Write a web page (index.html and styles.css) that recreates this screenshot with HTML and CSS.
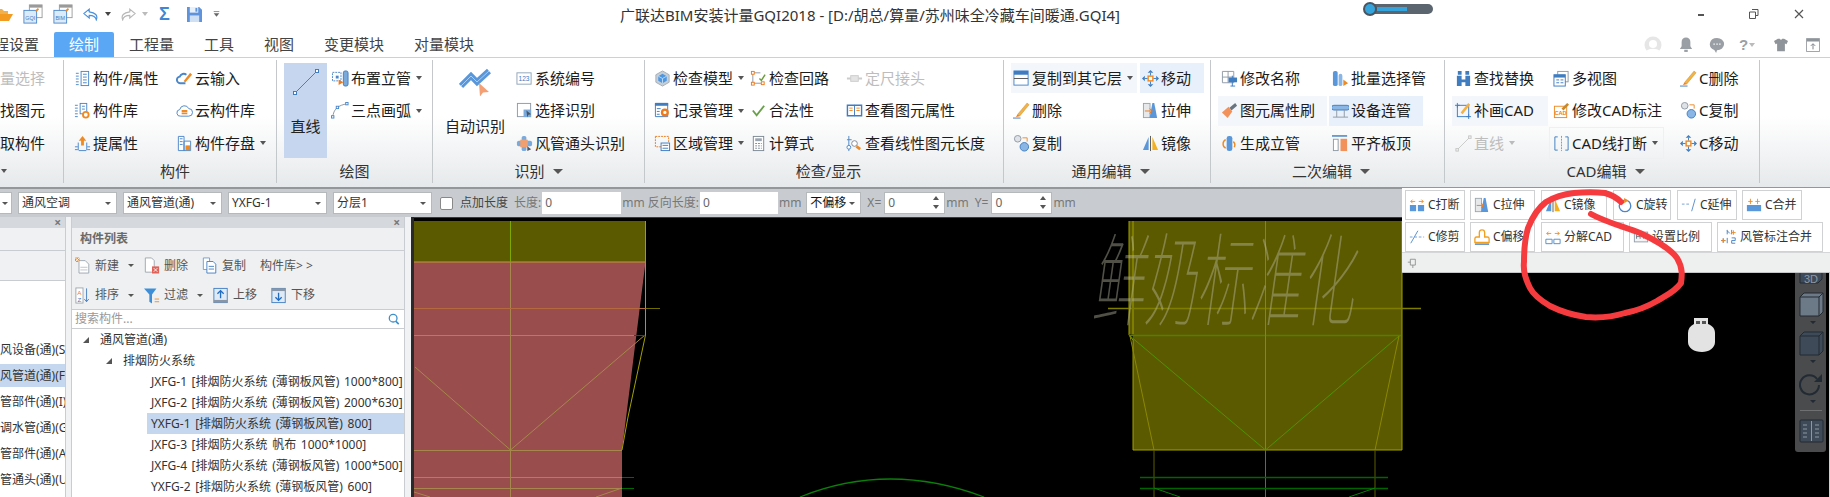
FILE: index.html
```html
<!DOCTYPE html>
<html lang="zh-CN">
<head>
<meta charset="utf-8">
<title>广联达BIM安装计量GQI2018</title>
<link rel="stylesheet" href="styles.css">
</head>
<body>
<svg class="sprite" xmlns="http://www.w3.org/2000/svg">
<symbol id="list" viewBox="0 0 18 18"><g fill="none" stroke="#4a86c8"><rect x="7.5" y="1.5" width="8" height="15"/><path d="M9.5 4.500h4M9.500 7.500h4M9.500 10.500h4M9.500 13.500h4M2 3.500h3M2 6.500h3M2 9.500h3M2 12.500h3M2 15.500h3"/></g></symbol>
<symbol id="liblist" viewBox="0 0 18 18"><g fill="none" stroke="#4a86c8"><rect x="6.500" y="1.500" width="7" height="11"/><path d="M8.500 4.500h3M8.500 7.500h3M1 3.500h3M1 6.500h3M1 9.500h3M1 12.500h3M1 15.500h3"/></g><circle cx="12.500" cy="13.500" r="3" fill="#fff" stroke="#ee8a24" stroke-width="2"/></symbol>
<symbol id="upattr" viewBox="0 0 18 18"><path d="M9 1l4 5h-2.500v5h-3V6H5z" fill="#ee8a24"/><path d="M1 12.500h3M1 15.500h3M14 12.500h3M14 15.500h3M5 16.500h8M4.500 8v8M13.500 8v8" fill="none" stroke="#4a86c8"/></symbol>
<symbol id="cloudpen" viewBox="0 0 18 18"><path d="M10 14H5a3.500 3.500 0 0 1-1-7 4.500 4.500 0 0 1 7-2" fill="none" stroke="#4a86c8" stroke-width="2"/><path d="M8 12l7-9 2 2-7 8z" fill="#ee8a24"/></symbol>
<symbol id="cloudlib" viewBox="0 0 18 18"><path d="M5 15a3.500 3.500 0 0 1-1-7 5 5 0 0 1 9.500-1 4 4 0 0 1 0 8z" fill="#fff" stroke="#4a86c8"/><path d="M6 9.500h6M6 12h6" stroke="#ee8a24" stroke-width="2"/></symbol>
<symbol id="disk" viewBox="0 0 18 18"><path d="M2.500 1.500h6v15h-6zM8.500 6.500h7v10h-7z" fill="#fff" stroke="#4a86c8"/><path d="M4 4h3M4 7h3M4 10h3" stroke="#4a86c8"/><rect x="10" y="11" width="5" height="5" fill="#ee8a24"/></symbol>
<symbol id="riser" viewBox="0 0 20 18"><rect x="1.500" y="2.500" width="9" height="9" fill="none" stroke="#4a86c8" stroke-dasharray="2 1"/><rect x="5" y="6" width="3" height="3" fill="#4a86c8"/><rect x="13" y="1" width="5" height="16" rx="2" fill="#7aa9dc" stroke="#3f7cc0"/><path d="M8 10l5 3-5 3z" fill="#ee7a1c"/></symbol>
<symbol id="arc" viewBox="0 0 20 18"><path d="M2 16C2 8 8 3 17 2" fill="none" stroke="#8a96a4"/><g fill="#fff" stroke="#4a86c8"><rect x="0.500" y="14.500" width="2.500" height="2.500"/><rect x="15.500" y="0.500" width="2.500" height="2.500"/><rect x="5.500" y="4.500" width="2.500" height="2.500"/></g></symbol>
<symbol id="num" viewBox="0 0 18 18"><rect x="1" y="3" width="15" height="12" fill="#fff" stroke="#8fa3b8"/><text x="8.500" y="12" font-size="7" text-anchor="middle" fill="#3f7cc0" font-family="Liberation Sans">123</text></symbol>
<symbol id="sel" viewBox="0 0 18 18"><rect x="1.500" y="1.500" width="14" height="14" fill="#fff" stroke="#8f9aa6"/><rect x="8" y="8" width="8" height="8" fill="#7aa9dc"/><path d="M11 9l5 4-3 .5-1 3z" fill="#4a5560"/></symbol>
<symbol id="joint" viewBox="0 0 18 18"><rect x="6" y="1" width="5" height="16" rx="2" fill="#7aa9dc"/><rect x="1" y="6" width="16" height="6" rx="2" fill="#7aa9dc"/><rect x="4.500" y="5" width="8" height="8" fill="#f0a070"/><path d="M12 12l4 3-4 2z" fill="#4a5560"/></symbol>
<symbol id="cube" viewBox="0 0 18 18"><path d="M9 1l7 4v8l-7 4-7-4V5z" fill="#c7ced6" stroke="#a4adb6"/><path d="M9 4l4.500 2.500v5L9 14l-4.500-2.500v-5z" fill="#4f97e0"/><path d="M4.500 6.500L9 9l4.500-2.500M9 9v5" fill="none" stroke="#bcdcf8"/></symbol>
<symbol id="loop" viewBox="0 0 18 18"><path d="M3 2v12h9M3 3h8" fill="none" stroke="#8a96a4"/><path d="M10 9l2 2 4-6" fill="none" stroke="#6a9d3a" stroke-width="1.500"/><g fill="#fff" stroke="#ee7a1c"><rect x="1.500" y="1.500" width="3" height="3"/><rect x="1.500" y="13" width="3" height="3"/><rect x="12" y="12.500" width="3" height="3"/></g></symbol>
<symbol id="ruler" viewBox="0 0 18 18"><path d="M1 9h4M13 9h4" stroke="#ccc" stroke-width="2"/><rect x="5" y="6" width="8" height="6" fill="#e4e4e4" stroke="#ccc"/></symbol>
<symbol id="recgear" viewBox="0 0 18 18"><path d="M1.500 1.500h13v14h-13z" fill="#fff" stroke="#3f7cc0"/><path d="M1 1h14v3H1z" fill="#3f7cc0"/><path d="M3 7h4M3 10h3M3 13h3" stroke="#3f7cc0"/><circle cx="11.500" cy="11" r="3" fill="#fff" stroke="#ee7a1c" stroke-width="2.500"/></symbol>
<symbol id="check" viewBox="0 0 18 18"><path d="M3 9l4 5 8-10" fill="none" stroke="#6aa04a" stroke-width="2"/></symbol>
<symbol id="calc" viewBox="0 0 18 18"><rect x="3.500" y="1.500" width="11" height="15" fill="#fff" stroke="#7d8895"/><rect x="5.500" y="3.500" width="7" height="3" fill="#9aa4ae"/><path d="M5.500 9h7M5.500 11.500h7M5.500 14h7" stroke="#7d8895" stroke-dasharray="2 1"/></symbol>
<symbol id="area" viewBox="0 0 18 18"><rect x="1.500" y="1.500" width="14" height="11" fill="none" stroke="#ee7a1c" stroke-dasharray="2 1"/><rect x="7.500" y="8.500" width="9" height="8" fill="#fff" stroke="#3f7cc0"/><path d="M9 11h6M9 14h6" stroke="#3f7cc0"/></symbol>
<symbol id="book" viewBox="0 0 18 18"><path d="M1.500 3.500h15v11h-15z" fill="#fff" stroke="#3f7cc0" stroke-width="1.500"/><path d="M9 3v12" stroke="#3f7cc0"/><path d="M3.500 6.500h3.500M3.500 9h3.500M11 6.500h3.500M11 9h3.500" stroke="#ee8a24"/></symbol>
<symbol id="measure" viewBox="0 0 18 18"><path d="M3 1v16M1 5h5" stroke="#4a86c8" fill="none"/><circle cx="3" cy="13" r="2" fill="#fff" stroke="#4a86c8"/><circle cx="9" cy="9" r="3" fill="#fff" stroke="#7d8895"/><path d="M11 12l4 3" stroke="#ee8a24" stroke-width="3"/></symbol>
<symbol id="window" viewBox="0 0 18 18"><rect x="1" y="1" width="15" height="15" fill="#fff" stroke="#4a86c8"/><rect x="1" y="1" width="15" height="4" fill="#3f7cc0"/><path d="M1 9h15" stroke="#555"/></symbol>
<symbol id="move" viewBox="0 0 18 18"><path d="M9 0l3 3H6zM9 18l-3-3h6zM0 9l3-3v6zM18 9l-3 3V6z" fill="#3f7cc0"/><path d="M9 3v3M9 12v3M3 9h3M12 9h3" stroke="#3f7cc0"/><rect x="6.500" y="6.500" width="5" height="5" fill="#fff" stroke="#ee8a24" stroke-width="1.500"/></symbol>
<symbol id="pencil" viewBox="0 0 18 18"><path d="M5 13L15 1l2 2L7 15z" fill="#f2b344" stroke="#c88a2a" stroke-width=".5"/><path d="M3 16l2-3 2 2z" fill="#ee7a1c"/><path d="M0 17h8" stroke="#3f7cc0"/></symbol>
<symbol id="stretch" viewBox="0 0 18 18"><rect x="1.500" y="1.500" width="7" height="15" fill="#e6e8ea" stroke="#9aa4ae"/><path d="M11 1h2l3 16H8z" fill="#5a97da"/><path d="M3 9.500h7M8 7l3 2.500L8 12" fill="none" stroke="#ee7a1c"/></symbol>
<symbol id="copy" viewBox="0 0 18 18"><circle cx="5" cy="4" r="3.500" fill="#dfe3e7" stroke="#8f9aa6"/><circle cx="12" cy="12.500" r="4.500" fill="#8ab6e6" stroke="#3f7cc0"/><path d="M10 3h5v4" fill="none" stroke="#ee8a24"/></symbol>
<symbol id="mirror" viewBox="0 0 18 18"><path d="M1 16L7 2v14z" fill="#5a97da"/><path d="M11 2l6 14h-6z" fill="#f2b020"/><path d="M9 1v16" stroke="#555"/></symbol>
<symbol id="rename" viewBox="0 0 18 18"><path d="M1.500 1.500h12v12h-12zM1.500 7.500h12M7.500 1.500v12" fill="#fff" stroke="#8f9aa6"/><path d="M8 8h9v5H8z" fill="#3f7cc0"/><path d="M12 6v11M10 17h5" stroke="#3f7cc0"/></symbol>
<symbol id="batch" viewBox="0 0 18 18"><rect x="1" y="1" width="5" height="16" rx="2" fill="#5a97da"/><rect x="7" y="4" width="4" height="13" rx="2" fill="#8ab6e6"/><path d="M12 10l5 4-5 3z" fill="#ee8a24"/></symbol>
<symbol id="brush" viewBox="0 0 18 18"><path d="M9 6l6-5 2 3-6 5z" fill="#6a7480"/><path d="M1 11l7-6 4 5-5 7z" fill="#f2925a"/></symbol>
<symbol id="fit" viewBox="0 0 18 18"><path d="M2 3.500h14a1 1 0 0 1 0 5H2a1 1 0 0 1 0-5z" fill="#8ab6e6" stroke="#3f7cc0"/><path d="M5 8v8M13 8v8M1 16h16" stroke="#8f9aa6" fill="none"/></symbol>
<symbol id="gen" viewBox="0 0 18 18"><rect x="6" y="1" width="6" height="16" rx="2.500" fill="#5a97da"/><path d="M5 5a5 5 0 0 0 0 9M13 7a5 5 0 0 1 1 6" fill="none" stroke="#ee8a24" stroke-width="1.500"/></symbol>
<symbol id="align" viewBox="0 0 18 18"><path d="M0 1h16" stroke="#3f7cc0" stroke-width="1.500"/><rect x="1.500" y="4.500" width="5" height="12" fill="#fff" stroke="#8f9aa6"/><rect x="9" y="4" width="7" height="13" fill="#f2925a"/></symbol>
<symbol id="find" viewBox="0 0 18 18"><path d="M2 6h5v4h4V6h5v11h-5v-4H7v4H2zM3 1h4v4H3zM11 1h4v4h-4z" fill="#3f7cc0"/></symbol>
<symbol id="multi" viewBox="0 0 18 18"><rect x="5" y="1.500" width="11" height="11" fill="#fff" stroke="#8f9aa6"/><rect x="1" y="5" width="12" height="12" fill="#fff" stroke="#3f7cc0"/><path d="M1 5h12v3H1z" fill="#3f7cc0"/><path d="M3.500 10.500h3M8 10.500h3M3.500 13.500h3M8 13.500h3" stroke="#3f7cc0"/></symbol>
<symbol id="patch" viewBox="0 0 18 18"><rect x="2.500" y="3.500" width="12" height="12" fill="none" stroke="#3f7cc0"/><path d="M0 3.500h5M2.500 1v5M12 15.500h5M14.500 13v5" stroke="#3f7cc0"/><path d="M6 11l8-10 2 2-8 10z" fill="#f2b344"/></symbol>
<symbol id="modcad" viewBox="0 0 18 18"><rect x="1.500" y="4.500" width="13" height="12" fill="#fff" stroke="#ee8a24"/><text x="8" y="14" font-size="6" text-anchor="middle" fill="#ee7a1c" font-weight="700" font-family="Liberation Sans">CAD</text><path d="M9 7l6-6 2 2-6 6z" fill="#c88a2a"/></symbol>
<symbol id="gline" viewBox="0 0 18 18"><path d="M2 16L16 2" stroke="#c9c9c9"/><rect x="1" y="14.500" width="2.500" height="2.500" fill="#fff" stroke="#c0c0c0"/><rect x="14.500" y="1" width="2.500" height="2.500" fill="#fff" stroke="#c0c0c0"/></symbol>
<symbol id="cadcut" viewBox="0 0 18 18"><path d="M5 2H2v14h3M13 2h3v14h-3" fill="none" stroke="#3f7cc0"/><path d="M9 1v16" stroke="#ee7a1c" stroke-dasharray="2 1"/></symbol>
<symbol id="bars" viewBox="0 0 18 18"><rect x="1" y="9" width="7" height="7" fill="#5a97da"/><rect x="10" y="9" width="7" height="7" fill="#5a97da"/><path d="M2 5h5M4 3L2 5l2 2M16 5h-5M14 3l2 2-2 2" fill="none" stroke="#ee8a24"/></symbol>
<symbol id="merge" viewBox="0 0 18 18"><rect x="1" y="9" width="16" height="7" fill="#5a97da"/><path d="M5 2v6M2.500 5h5M13 2v6M10.500 5h5" fill="none" stroke="#ee8a24"/></symbol>
<symbol id="rotate" viewBox="0 0 18 18"><circle cx="9" cy="10" r="6.500" fill="none" stroke="#4a86c8" stroke-width="1.500"/><path d="M8 1l5 3-5 3z" fill="#ee8a24"/></symbol>
<symbol id="extend" viewBox="0 0 18 18"><path d="M1 8h10" stroke="#6a9ad0" stroke-dasharray="3 2"/><path d="M12 16l4-14" stroke="#4a86c8"/></symbol>
<symbol id="trim" viewBox="0 0 18 18"><path d="M2 16L10 2" stroke="#4a86c8"/><path d="M1 9h16" stroke="#6a9ad0" stroke-dasharray="3 2"/></symbol>
<symbol id="offset" viewBox="0 0 18 18"><path d="M1 15v-4c0-1 1-2 2-2h3V4c0-2 1-3 3-3s3 1 3 3v5h3c1 0 2 1 2 2v4z" fill="#fff" stroke="#f2a020" stroke-width="1.500"/><path d="M1 17h16" stroke="#3f7cc0" stroke-width="1.500"/></symbol>
<symbol id="explode" viewBox="0 0 18 18"><path d="M1 11.500h7v5H1zM10 11.500h7v5h-7z" fill="#fff" stroke="#4a86c8"/><path d="M2 5h5M4 3L2 5l2 2M16 5h-5M14 3l2 2-2 2" fill="none" stroke="#ee8a24"/></symbol>
<symbol id="scale" viewBox="0 0 18 18"><rect x="1.500" y="3.500" width="15" height="11" fill="#f2f4f6" stroke="#8f9aa6"/><path d="M4 6v5M4 8.500h4M8 6v5M12 6v5" stroke="#6a7480"/></symbol>
<symbol id="hmerge" viewBox="0 0 18 18"><path d="M7 1v5M12 1v5M7 2l3 3M0 13h5M2.500 10.500v5" stroke="#3f7cc0" fill="none"/><path d="M14 1.500v5M11.500 4h5M2.500 10.500v5M0 13h5" stroke="#ee8a24" fill="none"/><path d="M7 10v6M12 16h4M12 10h4v3h-4v3" stroke="#3f7cc0" fill="none"/></symbol>
<symbol id="new" viewBox="0 0 18 18"><path d="M4.500 3.500h7l4 4v10h-11z" fill="#fff" stroke="#9aa4ae"/><path d="M6 11h8M6 14h8" stroke="#b8c0c8"/><path d="M0 0h5v5H0z" fill="#ee8a24"/><path d="M0 0l5 5M5 0L0 5" stroke="#fff"/></symbol>
<symbol id="del" viewBox="0 0 18 18"><path d="M1.500.5h7l3 3v13h-10z" fill="#fff" stroke="#9aa4ae"/><rect x="9" y="10" width="8" height="8" fill="#e0635a"/><path d="M11 12l4 4M15 12l-4 4" stroke="#fff"/></symbol>
<symbol id="dup" viewBox="0 0 18 18"><path d="M1.500.5h7v13h-7z" fill="#fff" stroke="#6a9ad0"/><path d="M5.500 4.500h7l3 3v10h-10z" fill="#fff" stroke="#3f7cc0"/><path d="M7.500 10h6M7.500 13h6" stroke="#3f7cc0"/></symbol>
<symbol id="sort" viewBox="0 0 18 18"><rect x="1" y="0.500" width="8" height="17" fill="#fff" stroke="#9aa4ae"/><text x="5" y="8" font-size="7" text-anchor="middle" fill="#ee7a1c" font-family="Liberation Sans">A</text><text x="5" y="16" font-size="7" text-anchor="middle" fill="#3f7cc0" font-family="Liberation Sans">Z</text><path d="M13 1v15M10.500 13l2.500 3 2.500-3" fill="none" stroke="#3f7cc0"/></symbol>
<symbol id="funnel" viewBox="0 0 18 18"><path d="M0 1h14L9 8v10L6 16V8z" fill="#3f8fd8"/><path d="M12 13h5M12 16h5" stroke="#ee8a24"/></symbol>
<symbol id="moveup" viewBox="0 0 18 18"><rect x="1" y="1" width="15" height="16" fill="#dfeaf6" stroke="#3f7cc0"/><rect x="1" y="14" width="15" height="3" fill="#8a96a4"/><path d="M8.500 12V4M5 7l3.500-3.500L12 7" fill="none" stroke="#1f6cc0" stroke-width="1.500"/></symbol>
<symbol id="movedn" viewBox="0 0 18 18"><rect x="1" y="1" width="15" height="16" fill="#dfeaf6" stroke="#3f7cc0"/><rect x="1" y="1" width="15" height="3" fill="#8a96a4"/><path d="M8.500 6v8M5 11l3.500 3.500L12 11" fill="none" stroke="#1f6cc0" stroke-width="1.500"/></symbol>
</svg>

<header class="titlebar">
  <div class="qat">
    <svg class="qi folder" viewBox="0 0 18 16"><path d="M0 3h6l2 2h4v3H4L0 15z" fill="#f0b050"/><path d="M3 8h14l-4 7H0z" fill="#f29a22"/></svg>
    <svg class="qi prj" viewBox="0 0 22 22"><rect x="7" y="1" width="14" height="14" fill="#fff" stroke="#9a9a9a"/><rect x="7" y="1" width="14" height="3" fill="#9a9a9a"/><rect x="1" y="7" width="14" height="14" fill="#dcebf9" stroke="#4a86c8"/><text x="8" y="18" font-size="6" text-anchor="middle" fill="#3f7cc0" font-family="Liberation Sans">GQI</text><path d="M14 8l3-3" stroke="#ee8a24" stroke-width="2"/></svg>
    <svg class="qi prj" viewBox="0 0 22 22"><rect x="7" y="1" width="14" height="14" fill="#fff" stroke="#9a9a9a"/><rect x="7" y="1" width="14" height="3" fill="#9a9a9a"/><rect x="1" y="7" width="14" height="14" fill="#dcebf9" stroke="#4a86c8"/><text x="8" y="18" font-size="6" text-anchor="middle" fill="#3f7cc0" font-family="Liberation Sans">BIM</text><path d="M14 8l3-3" stroke="#ee8a24" stroke-width="2"/></svg>
    <svg class="qi undo" viewBox="0 0 18 14"><path d="M7 1L1 6l6 5V8c4 0 7 .5 8 5 2-5-1-8-8-9z" fill="#fff" stroke="#4a90dd" stroke-width="1.300"/></svg>
    <i class="caret dark"></i>
    <svg class="qi redo" viewBox="0 0 18 14"><path d="M11 1l6 5-6 5V8c-4 0-7 .5-8 5-2-5 1-8 8-9z" fill="#fff" stroke="#b8b8b8" stroke-width="1.300"/></svg>
    <i class="caret light"></i>
    <span class="sigma">Σ</span>
    <svg class="qi save" viewBox="0 0 16 16"><path d="M0 0h13l3 3v13H0z" fill="#5f94dc"/><rect x="3" y="0" width="9" height="6" fill="#e8f0fa"/><rect x="9" y="1" width="2" height="4" fill="#5f94dc"/><rect x="3" y="9" width="10" height="7" fill="#cfe0f5"/></svg>
    <svg class="qi more" viewBox="0 0 10 10"><path d="M1 1.500h8" stroke="#666"/><path d="M1 4h8L5 9z" fill="#666"/></svg>
  </div>
  <h1 class="title">广联达BIM安装计量GQI2018 - [D:/胡总/算量/苏州味全冷藏车间暖通.GQI4]</h1>
  <div class="slider"><span class="knob"></span><span class="fill"></span></div>
  <div class="winctl">
    <svg class="wmin" viewBox="0 0 8 4"><rect width="6" height="2" fill="#555"/></svg>
    <svg class="wmax" viewBox="0 0 10 10"><path d="M3 .5h6v6H7M.5 3h6v6.500h-6z" fill="#fff" stroke="#555"/></svg>
    <svg class="wclose" viewBox="0 0 10 10"><path d="M1 1l8 8M9 1L1 9" stroke="#555" stroke-width="1.200"/></svg>
  </div>
</header>

<nav class="tabs">
  <span class="tab first">程设置</span>
  <span class="tab on">绘制</span>
  <span class="tab">工程量</span>
  <span class="tab">工具</span>
  <span class="tab">视图</span>
  <span class="tab">变更模块</span>
  <span class="tab">对量模块</span>
  <div class="tabtools">
    <svg class="tt avatar" viewBox="0 0 18 18"><circle cx="9" cy="9" r="8.500" fill="#e6e6e6"/><circle cx="9" cy="8" r="4" fill="#fff"/><path d="M2.500 15c2-3 11-3 13 0a8.500 8.500 0 0 1-13 0z" fill="#fff"/></svg>
    <svg class="tt bell" viewBox="0 0 16 18"><path d="M8 1c3 0 5 2 5 5v5l2 3H1l2-3V6c0-3 2-5 5-5z" fill="#9a9fa5"/><rect x="6" y="15" width="4" height="2.500" fill="#9a9fa5"/></svg>
    <svg class="tt chat" viewBox="0 0 18 18"><path d="M9 1a8 7 0 0 1 0 14l-1 3-2-3.500A8 7 0 0 1 9 1z" fill="#9a9fa5"/><path d="M5 8h1.500M8.300 8h1.500M11.500 8H13" stroke="#fff" stroke-width="1.500"/></svg>
    <span class="tt help">?<i class="caret light"></i></span>
    <svg class="tt shirt" viewBox="0 0 18 18"><path d="M5 1h2.500c.5 1.500 2.500 1.500 3 0H13l5 3-2 4-2-1v10H4V7L2 8 0 4z" fill="#8f949a"/></svg>
    <svg class="tt box" viewBox="0 0 16 16"><path d="M.5.500h15v15H.5z" fill="#fff" stroke="#8f949a"/><path d="M1 1h14v3H1z" fill="#8f949a"/><path d="M8 13V7M5.500 9L8 6.500 10.500 9" fill="none" stroke="#6f747a"/></svg>
  </div>
</nav>

<section class="ribbon">
  <div class="grp g0">
    <div class="body"><div class="cols">
      <span class="it off">量选择</span><span class="it">找图元</span><span class="it">取构件</span>
    </div></div>
    <div class="lab"><i class="caret"></i></div>
  </div>
  <div class="grp g1">
    <div class="body"><div class="cols">
      <span class="it"><svg class="ic"><use href="#list"/></svg>构件/属性</span><span class="it"><svg class="ic"><use href="#cloudpen"/></svg>云输入</span>
      <span class="it"><svg class="ic"><use href="#liblist"/></svg>构件库</span><span class="it"><svg class="ic"><use href="#cloudlib"/></svg>云构件库</span>
      <span class="it"><svg class="ic"><use href="#upattr"/></svg>提属性</span><span class="it"><svg class="ic"><use href="#disk"/></svg>构件存盘<i class="caret"></i></span>
    </div></div>
    <div class="lab">构件</div>
  </div>
  <div class="grp g2">
    <div class="body">
      <div class="big sel"><svg class="bigline" viewBox="0 0 26 26"><path d="M2 24L24 2" stroke="#6a7a8c"/><rect x="0.500" y="22.500" width="3" height="3" fill="#fff" stroke="#3f7cc0"/><rect x="22.500" y="0.500" width="3" height="3" fill="#fff" stroke="#3f7cc0"/></svg><span>直线</span></div>
      <div class="cols">
        <span class="it w"><svg class="ic wide"><use href="#riser"/></svg>布置立管<i class="caret"></i></span>
        <span class="it w"><svg class="ic wide"><use href="#arc"/></svg>三点画弧<i class="caret"></i></span>
      </div>
    </div>
    <div class="lab">绘图</div>
  </div>
  <div class="grp g3">
    <div class="body">
      <div class="big auto"><svg class="bigduct" viewBox="0 0 32 28"><path d="M2 18L12 8l6 6L30 3" fill="none" stroke="#5a97da" stroke-width="6"/><path d="M2 18L12 8l6 6L30 3" fill="none" stroke="#a9ccf0" stroke-width="1"/><path d="M20 15l10 9-6 .5-3 4z" fill="#f4a074"/></svg><span>自动识别</span></div>
      <div class="cols">
        <span class="it"><svg class="ic"><use href="#num"/></svg>系统编号</span>
        <span class="it"><svg class="ic"><use href="#sel"/></svg>选择识别</span>
        <span class="it"><svg class="ic"><use href="#joint"/></svg>风管通头识别</span>
      </div>
    </div>
    <div class="lab">识别<i class="caret big-c"></i></div>
  </div>
  <div class="grp g4">
    <div class="body"><div class="cols">
      <span class="it"><svg class="ic"><use href="#cube"/></svg>检查模型<i class="caret"></i></span><span class="it"><svg class="ic"><use href="#loop"/></svg>检查回路</span><span class="it off"><svg class="ic"><use href="#ruler"/></svg>定尺接头</span>
      <span class="it"><svg class="ic"><use href="#recgear"/></svg>记录管理<i class="caret"></i></span><span class="it"><svg class="ic"><use href="#check"/></svg>合法性</span><span class="it"><svg class="ic"><use href="#book"/></svg>查看图元属性</span>
      <span class="it"><svg class="ic"><use href="#area"/></svg>区域管理<i class="caret"></i></span><span class="it"><svg class="ic"><use href="#calc"/></svg>计算式</span><span class="it"><svg class="ic"><use href="#measure"/></svg>查看线性图元长度</span>
    </div></div>
    <div class="lab">检查/显示</div>
  </div>
  <div class="grp g5">
    <div class="body"><div class="cols">
      <span class="it hl soft"><svg class="ic"><use href="#window"/></svg>复制到其它层<i class="caret"></i></span><span class="it hl"><svg class="ic"><use href="#move"/></svg>移动</span>
      <span class="it"><svg class="ic"><use href="#pencil"/></svg>删除</span><span class="it"><svg class="ic"><use href="#stretch"/></svg>拉伸</span>
      <span class="it"><svg class="ic"><use href="#copy"/></svg>复制</span><span class="it"><svg class="ic"><use href="#mirror"/></svg>镜像</span>
    </div></div>
    <div class="lab">通用编辑<i class="caret big-c"></i></div>
  </div>
  <div class="grp g6">
    <div class="body"><div class="cols">
      <span class="it"><svg class="ic"><use href="#rename"/></svg>修改名称</span><span class="it"><svg class="ic"><use href="#batch"/></svg>批量选择管</span>
      <span class="it hl soft"><svg class="ic"><use href="#brush"/></svg>图元属性刷</span><span class="it hl"><svg class="ic"><use href="#fit"/></svg>设备连管</span>
      <span class="it"><svg class="ic"><use href="#gen"/></svg>生成立管</span><span class="it"><svg class="ic"><use href="#align"/></svg>平齐板顶</span>
    </div></div>
    <div class="lab">二次编辑<i class="caret big-c"></i></div>
  </div>
  <div class="grp g7">
    <div class="body"><div class="cols">
      <span class="it"><svg class="ic"><use href="#find"/></svg>查找替换</span><span class="it"><svg class="ic"><use href="#multi"/></svg>多视图</span><span class="it"><svg class="ic"><use href="#pencil"/></svg>C删除</span>
      <span class="it hl soft"><svg class="ic"><use href="#patch"/></svg>补画CAD</span><span class="it"><svg class="ic"><use href="#modcad"/></svg>修改CAD标注</span><span class="it"><svg class="ic"><use href="#copy"/></svg>C复制</span>
      <span class="it off"><svg class="ic"><use href="#gline"/></svg>直线<i class="caret light"></i></span><span class="it outl"><svg class="ic"><use href="#cadcut"/></svg>CAD线打断<i class="caret"></i></span><span class="it"><svg class="ic"><use href="#move"/></svg>C移动</span>
    </div></div>
    <div class="lab">CAD编辑<i class="caret big-c"></i></div>
  </div>
</section>

<section class="optbar">
  <span class="combo c0"><i class="caret"></i></span>
  <span class="combo"><b>通风空调</b><i class="caret"></i></span>
  <span class="combo"><b>通风管道(通)</b><i class="caret"></i></span>
  <span class="combo"><b>YXFG-1</b><i class="caret"></i></span>
  <span class="combo"><b>分层1</b><i class="caret"></i></span>
  <span class="cb"></span>
  <span class="opt strong">点加长度</span>
  <span class="opt m6">长度:</span>
  <span class="inp w79">0</span>
  <span class="opt">mm</span>
  <span class="opt m3">反向长度:</span>
  <span class="inp w78">0</span>
  <span class="opt">mm</span>
  <span class="combo off"><b>不偏移</b><i class="caret"></i></span>
  <span class="opt m6">X=</span>
  <span class="inp spin">0<em></em></span>
  <span class="opt">mm</span>
  <span class="opt m6">Y=</span>
  <span class="inp spin">0<em></em></span>
  <span class="opt">mm</span>
</section>

<main class="work">
  <aside class="pane p1">
    <div class="pt"><span>×</span></div>
    <div class="band b1"></div>
    <div class="band b2"></div>
    <ul class="navtree">
      <li>风设备(通)(S</li>
      <li class="cur">风管道(通)(F</li>
      <li>管部件(通)(I)</li>
      <li>调水管(通)(G</li>
      <li>管部件(通)(A</li>
      <li>管通头(通)(U</li>
    </ul>
  </aside>
  <aside class="pane p2">
    <div class="pt"><span>×</span></div>
    <div class="pname">构件列表</div>
    <div class="ptools">
      <div class="pr">
        <span class="pb w69"><svg class="pi"><use href="#new"/></svg>新建<i class="caret"></i></span>
        <span class="pb w58"><svg class="pi"><use href="#del"/></svg>删除</span>
        <span class="pb w58"><svg class="pi"><use href="#dup"/></svg>复制</span>
        <span class="pb">构件库&gt; &gt;</span>
      </div>
      <div class="pr">
        <span class="pb w69"><svg class="pi"><use href="#sort"/></svg>排序<i class="caret"></i></span>
        <span class="pb w69"><svg class="pi"><use href="#funnel"/></svg>过滤<i class="caret"></i></span>
        <span class="pb w58"><svg class="pi"><use href="#moveup"/></svg>上移</span>
        <span class="pb"><svg class="pi"><use href="#movedn"/></svg>下移</span>
      </div>
    </div>
    <div class="search"><span>搜索构件...</span><svg viewBox="0 0 14 14"><circle cx="6" cy="6" r="4.500" fill="none" stroke="#3f8fc8" stroke-width="1.500"/><path d="M9 9.500l3.500 3.500" stroke="#3f8fc8" stroke-width="2"/></svg></div>
    <ul class="tree">
      <li class="l0"><i class="tw"></i>通风管道(通)</li>
      <li class="l1"><i class="tw"></i>排烟防火系统</li>
      <li class="l2">JXFG-1 [排烟防火系统 (薄钢板风管) 1000*800]</li>
      <li class="l2">JXFG-2 [排烟防火系统 (薄钢板风管) 2000*630]</li>
      <li class="l2 cur">YXFG-1 [排烟防火系统 (薄钢板风管) 800]</li>
      <li class="l2">JXFG-3 [排烟防火系统 帆布 1000*1000]</li>
      <li class="l2">JXFG-4 [排烟防火系统 (薄钢板风管) 1000*500]</li>
      <li class="l2">YXFG-2 [排烟防火系统 (薄钢板风管) 600]</li>
    </ul>
  </aside>
  <div class="canvas">
    <svg class="cad" viewBox="411 217 1419 280" xmlns="http://www.w3.org/2000/svg">
      <rect x="411" y="217" width="1419" height="280" fill="#000"/>
      <rect x="411" y="217" width="1419" height="1" fill="#3a3a3a"/>
      <rect x="411" y="217" width="3" height="280" fill="#2a2a2a"/>
      <rect x="414" y="221" width="231.500" height="41" fill="#5c5a00"/>
      <path d="M414 262h231.500L622 450v47H414z" fill="#994d4d"/>
      <path d="M645.500 221v114L628 417l-6 33" fill="none" stroke="#a3a100"/>
      <path d="M414 262h231" stroke="#c09a3c"/>
      <path d="M510.500 221v41" stroke="#7ea800"/>
      <path d="M510.500 262v235" stroke="#a6884c"/>
      <path d="M414 308.500h232" stroke="#b4693f"/><path d="M646 308.500h14" stroke="#6f6d00"/>
      <path d="M414 335.500h231M414 450.500h208M414 477.500h208M414 488.500h208" stroke="#a6884c"/>
      <path d="M415 367l95.500 83L645 335M414 492l16 5M622 488l-26 9" fill="none" stroke="#a6884c"/>
      <path d="M634 335.500h11M622 477.500h12M622 488.500h12" stroke="#006a00"/>
      <path d="M800 497Q889 461 984 497" fill="none" stroke="#0a7f0a" stroke-width="1.300"/>
      <path d="M1133 221h269v229h-269v-115l-4-1v-113z" fill="#5c5a00"/>
      <path d="M1129 221v114l4 5v110h269V221M1133 221v113" fill="none" stroke="#a3a100"/>
      <path d="M1108 308.500h313" stroke="#7f7d00" stroke-width="1.500"/>
      <path d="M1129 335.500h272" stroke="#4f8200" stroke-width="1.300"/>
      <path d="M1265.500 221v229" stroke="#5fa000"/>
      <path d="M1265.500 450v47" stroke="#3f8a00"/>
      <path d="M1130 336l135.500 114L1399 336" fill="none" stroke="#4f9200"/>
      <path d="M1130 336l24 114M1399 336l-24 114" fill="none" stroke="#8a8800"/>
      <path d="M1154 450v47M1375 450v47" stroke="#5f5d00"/>
      <path d="M1140 477.500h248M1140 488.500h248" stroke="#006400" stroke-width="1.500"/>
      <path d="M1154 488l26 9M1375 488l-26 9" stroke="#0a7f0a"/>
      <text class="cadtext" transform="translate(1091 318) skewX(-8) scale(.75 1.45)">鲜奶标准化</text>
      <rect x="1795" y="260" width="31" height="192" rx="3" fill="#4a4b4d"/>
      <g fill="#3f4a58" stroke="#222a33">
        <path d="M1800 270v13h18l4-4v-9z"/>
        <path d="M1800 297l4-4h19v19l-4 4h-19z" fill="#6c7a88"/>
        <path d="M1800 336l4-4h19v19l-4 4h-19z"/>
        <path d="M1800 297h19v19M1819 297l4-4M1800 336h19v19M1819 336l4-4" fill="none"/>
        <rect x="1800" y="420" width="23" height="22" rx="1"/>
      </g>
      <text class="cadlabel" x="1811" y="283">3D</text>
      <path d="M1810 321h6l-3 3zM1810 360h6l-3 3zM1810 400h6l-3 3z" fill="#222a33"/>
      <path d="M1817 379a9.500 9.500 0 1 0 2 6" fill="none" stroke="#222a33" stroke-width="2"/>
      <path d="M1822 374v8h-8z" fill="#222a33"/>
      <path d="M1800 410.500h22" stroke="#6f7072"/>
      <path d="M1803 425h4M1803 429h4M1803 433h4M1803 437h4M1815 425h4M1815 429h4M1815 433h4M1815 437h4M1811.500 421v20" stroke="#8e98a4"/>
      <rect x="1829" y="273" width="1" height="224" fill="#cfcfcf"/>
      <path d="M1694 318h14v6c5 2 7 5 7 9v9c0 6-6 10-13 10-8 0-14-4-14-10v-9c0-4 2-7 6-9z" fill="#e3e3e3"/>
      <path d="M1696 321h4v3h-4zM1702 321h4v3h-4z" fill="#555"/>
    </svg>
  </div>
</main>

<div class="popup">
  <div class="pgrid">
    <div class="prow">
      <span class="pbtn s60"><svg class="pic"><use href="#bars"/></svg>C打断</span>
      <span class="pbtn s65"><svg class="pic"><use href="#stretch"/></svg>C拉伸</span>
      <span class="pbtn s66"><svg class="pic"><use href="#mirror"/></svg>C镜像</span>
      <span class="pbtn s58"><svg class="pic"><use href="#rotate"/></svg>C旋转</span>
      <span class="pbtn s60"><svg class="pic"><use href="#extend"/></svg>C延伸</span>
      <span class="pbtn s60"><svg class="pic"><use href="#merge"/></svg>C合并</span>
    </div>
    <div class="prow">
      <span class="pbtn s60"><svg class="pic"><use href="#trim"/></svg>C修剪</span>
      <span class="pbtn s65"><svg class="pic"><use href="#offset"/></svg>C偏移</span>
      <span class="pbtn s83"><svg class="pic"><use href="#explode"/></svg>分解CAD</span>
      <span class="pbtn s83"><svg class="pic"><use href="#scale"/></svg>设置比例</span>
      <span class="pbtn s106"><svg class="pic"><use href="#hmerge"/></svg>风管标注合并</span>
    </div>
  </div>
  <div class="pfoot"><svg viewBox="0 0 12 12"><path d="M4 1.500h6v7H4zM4 5H1M7 8.500V12" fill="none" stroke="#888"/></svg></div>
</div>

<svg class="scribble" viewBox="0 0 1830 497" xmlns="http://www.w3.org/2000/svg">
  <path d="M1591 214C1605 222 1625 227 1640 233C1655 240 1670 248 1677 258C1683 268 1682 276 1681 283C1675 292 1665 296 1657 301C1645 308 1635 311 1625 313C1612 317 1598 318 1586 317C1572 315 1560 311 1550 306C1540 300 1533 294 1530 288C1525 278 1523 270 1524 262C1524 248 1525 238 1528 228C1532 218 1538 208 1546 202C1556 196 1565 194 1574 193C1585 192 1596 192 1605 193C1612 195 1617 198 1621 202" fill="none" stroke="#f63b3f" stroke-width="6" stroke-linecap="round" stroke-linejoin="round"/>
</svg>
</body>
</html>
```
FILE: styles.css
```css
*{box-sizing:border-box}
html,body{margin:0;padding:0}
body{width:1830px;height:497px;overflow:hidden;position:relative;background:#fff;color:#222;font-family:"Noto Sans","Noto Sans CJK SC",sans-serif;font-size:12px;line-height:1}
.sprite{display:none}
ul{list-style:none;margin:0;padding:0}
.caret{display:inline-block;width:0;height:0;border-left:3.500px solid transparent;border-right:3.500px solid transparent;border-top:4px solid #555;flex:none}
.caret.dark{border-top-color:#444}
.caret.light{border-top-color:#bbb}

.titlebar{height:32px;display:flex;align-items:flex-start;position:relative}
.qat{display:flex;align-items:center;width:620px;height:28px;flex:none}
.qi{flex:none;display:block}
.folder{width:18px;height:16px;margin-left:-4px}
.prj{width:20px;height:20px;margin-left:9px}
.prj+.prj{margin-left:10px}
.undo{width:16px;height:13px;margin-left:10px}
.qat>.caret.dark{margin:0 0 0 6px}
.redo{width:16px;height:13px;margin-left:9px}
.qat>.caret.light{margin-left:6px}
.sigma{font:700 18px/1 "Liberation Sans",sans-serif;color:#3f86d6;margin-left:11px;width:14px}
.save{width:15px;height:15px;margin-left:14px}
.more{width:7px;height:8px;margin-left:11px}
.title{margin:0;font-size:15px;font-weight:400;color:#333;white-space:nowrap;width:744px;flex:none;line-height:30px}
.slider{width:69px;height:10px;border-radius:5px;background:#5a6570;position:relative;margin-top:4px;flex:none;display:flex;align-items:center}
.knob{width:14px;height:14px;border-radius:50%;background:#35a4dc;border:2px solid #4a5560;flex:none;margin-left:-1px}
.fill{width:30px;height:4px;background:#35a4dc;flex:none}
.winctl{display:flex;align-items:center;margin-left:auto;width:113px;flex:none;margin-right:19px;margin-top:9px}
.winctl svg{flex:none;display:block}
.wmin{width:8px;height:4px;margin:3px 0 0 0}
.wmax{width:10px;height:10px;margin-left:43px}
.wclose{width:10px;height:10px;margin-left:35px}

.tabs{height:26px;display:flex;border-bottom:1px solid #cfd0d2;font-size:15px;color:#444;position:relative}
.tab{padding:0 15px;line-height:25px;height:25px;flex:none}
.tab.first{margin-left:-6px;padding-left:0}
.tab.on{background:#5aa8f5;color:#fff;border-radius:2px 2px 0 0}
.tabtools{margin-left:auto;display:flex;align-items:center;height:25px;margin-right:10px}
.tt{display:block;flex:none;margin-left:16px}
.avatar{width:18px;height:18px}
.bell{width:14px;height:17px;margin-left:17px}
.chat{width:16px;height:16px}
.help{font:700 15px/1 "Liberation Sans",sans-serif;color:#9a9fa5;width:16px;margin-left:14px;display:flex;align-items:center;gap:1px}
.shirt{width:14px;height:14px;margin-left:19px}
.box{width:14px;height:14px;margin-left:18px}

.ribbon{height:129px;display:flex;background:linear-gradient(#fff 0,#fff 45%,#e6e9eb 100%);padding:2px 0 4px}
.grp{flex:none;display:flex;flex-direction:column;border-right:1px solid #c5c8cb;padding-top:2px}
.body{height:97.500px;display:flex;flex:none}
.cols{display:grid;grid-auto-rows:32.500px;align-items:center;flex:none}
.lab{height:24px;display:flex;align-items:center;justify-content:center;gap:8px;font-size:15px;color:#333}
.it{display:flex;align-items:center;font-size:15px;white-space:nowrap;height:30px;color:#1c1c1c;justify-self:start}
.it .caret{margin-left:5px}
.it.off{color:#bdbdbd}
.ic{width:17px;height:17px;flex:none;margin-right:2px}
.ic.wide{width:19px;margin-right:1px}
.hl{background:#e8f0fb}
.hl.soft{background:#f3f6fb}
.outl{outline:1px solid #eef0f2}
.big-c{border-left-width:5px;border-right-width:5px;border-top-width:5px;margin-top:1px}

.g0{width:64px}.g0 .lab{justify-content:flex-start;padding-left:1px}.g0 .cols{grid-template-columns:64px}
.g1{width:213px;padding-left:10px}.g1 .cols{grid-template-columns:102px auto}
.g2{width:156px}.g2 .big{margin-left:7px;width:43px}.g2 .cols{margin-left:4px}
.g3{width:212px}.g3 .big{margin-left:11px;width:62px}.g3 .cols{margin-left:10px}
.g4{width:359px;padding-left:9px}.g4 .cols{grid-template-columns:96px 96px auto}
.g5{width:207px;padding-left:7px}.g5 .cols{grid-template-columns:129px auto}
.g5 .hl.soft{width:126px;padding-left:2px}.g5 .hl{width:64px;padding-left:3px}
.g5 .it{padding-left:2px}
.g6{width:234px;padding-left:7px}.g6 .cols{grid-template-columns:111px auto}
.g6 .it{padding-left:3px}.g6 .hl.soft{width:109px}.g6 .hl{width:94px}
.g7{width:315px;padding-left:7px}.g7 .cols{grid-template-columns:98px 127px auto}
.g7 .it{padding-left:3px}.g7 .hl.soft{width:96px}.g7 .outl{width:113px}
.big{height:95px;margin-top:1px;display:flex;flex-direction:column;align-items:center;flex:none;font-size:15px}
.big.sel{background:#c5d6ee}
.big span{margin-top:24px}
.bigline{width:26px;height:26px;margin-top:6px;flex:none}
.big.auto span{margin-top:23px}
.bigduct{width:32px;height:28px;margin-top:5px;flex:none}

.optbar{height:30px;display:flex;align-items:center;background:#c8ccd0;border-top:2px solid #94979a;padding:0;color:#777;font-size:12px}
.combo{width:99px;height:22px;background:#fff;border:1px solid #b6b9bc;display:flex;align-items:center;justify-content:space-between;padding:0 5px 0 3px;margin-left:6px;flex:none;color:#333}
.combo b{font-weight:400;white-space:nowrap}
.combo.c0{width:12px;margin-left:0;padding:0;justify-content:flex-end;border-left:0}
.combo.c0 .caret{margin-right:3px}
.combo .caret{border-left-width:3px;border-right-width:3px;border-top-width:3px}
.combo.off{width:55px;color:#111;margin-left:5px}
.cb{width:13px;height:13px;background:#fff;border:1px solid #888;border-radius:2px;margin-left:8px;flex:none}
.opt{flex:none;white-space:nowrap;margin-left:1px}
.opt.strong{margin-left:7px;color:#444}
.opt.m6{margin-left:6px}
.opt.m3{margin-left:3px}
.inp{height:22px;background:#fff;color:#666;display:flex;align-items:center;padding-left:3px;flex:none;position:relative;margin-left:1px;font-size:12px}
.w79{width:79px}.w78{width:78px}
.spin{width:61px;border:1px solid #b6b9bc;margin-left:3px}
.spin em{position:absolute;right:5px;top:3px;width:0;height:0;border-left:3px solid transparent;border-right:3px solid transparent;border-bottom:4px solid #555}
.spin em::after{content:"";position:absolute;left:-3px;top:9px;width:0;height:0;border-left:3px solid transparent;border-right:3px solid transparent;border-top:4px solid #555}

.work{height:280px;display:flex;background:#f1f2f3}
.pane{flex:none;background:#fff;display:flex;flex-direction:column;overflow:hidden}
.p1{width:66px;border-right:1px solid #c9ccd0}
.p2{width:334px;margin-left:5px;border:solid #c9ccd0;border-width:0 1px}
.canvas{flex:none;margin-left:6px;width:1419px;height:280px;position:relative}
.cad{display:block;width:1419px;height:280px}
.cadtext{font-family:"Noto Sans CJK SC",sans-serif;font-size:70px;font-weight:100;fill:rgba(190,190,170,.42)}
.cadlabel{font:11px "Liberation Sans",sans-serif;fill:#8e98a4;text-anchor:middle}
.pt{height:11px;background:#d5d8dc;display:flex;justify-content:flex-end;align-items:center;padding-right:4px;flex:none;color:#777;font-size:12px;font-weight:700}
.band{background:#f0f1f2;border-bottom:1px solid #c9ccd0;flex:none}
.b1{height:23px}.b2{height:30px}
.navtree{padding-top:56px;font-size:12px;white-space:nowrap;color:#333}
.navtree li{height:26px;line-height:26px;margin-left:-2px;padding-left:2px}
.navtree li.cur{background:#c5d7ee;height:23px;line-height:23px;margin:1px 0 2px -2px}
.pname{height:23px;background:#eef0f1;border-bottom:1px solid #c9ccd0;font-size:12px;font-weight:700;color:#6a6a6a;padding-left:8px;line-height:22px;flex:none}
.ptools{height:59px;background:#eef0f1;border-bottom:1px solid #c9ccd0;flex:none;padding-left:3px}
.pr{height:29px;display:flex;align-items:center;color:#555;white-space:nowrap}
.pr+.pr{height:30px}
.pb{display:flex;align-items:center;flex:none;font-size:12px}
.w69{width:69px}.w58{width:58px}
.pb .caret{margin-left:9px;border-left-width:3px;border-right-width:3px;border-top-width:3px}
.pi{width:16px;height:17px;margin-right:4px;flex:none}
.search{height:19px;border-bottom:1px solid #c9ccd0;display:flex;align-items:center;justify-content:space-between;padding:0 4px 0 3px;color:#999;flex:none}
.search svg{width:12px;height:12px;display:block}
.tree{white-space:nowrap;color:#333;font-size:12px;word-spacing:1.500px}
.tree li{height:21px;line-height:21px;display:flex;align-items:center}
.tw{width:0;height:0;border-bottom:6px solid #555;border-left:6px solid transparent;flex:none;margin-right:11px}
.l0{padding-left:11px}
.l1{padding-left:34px}
.l2{margin-left:75px;padding-left:4px}
.l2.cur{background:#c5d7ee}

.popup{position:absolute;left:1402px;top:188px;width:428px;height:85px;background:#fff;border-bottom:1px solid #c4c6c8;display:flex;flex-direction:column}
.pgrid{height:65px;padding:2px 0 0 3px;display:flex;flex-direction:column;gap:2px;border-bottom:1px solid #d4d6d8;flex:none}
.prow{display:flex;gap:5px}
.pbtn{height:30px;border:1px solid #cfd1d2;background:#fff;display:flex;align-items:center;padding-left:3px;font-size:12px;color:#333;white-space:nowrap;flex:none}
.s60{width:60px}.s65{width:65px;margin-right:1px}.s66{width:66px;margin-right:1px}.s58{width:58px;margin-right:1px}.s83{width:83px}.s106{width:106px}
.pic{width:16px;height:16px;margin-right:3px;flex:none}
.pfoot{flex:1;background:#eef0f0;display:flex;align-items:center;padding-left:5px}
.pfoot svg{width:10px;height:10px;display:block}

.scribble{position:absolute;left:0;top:0;width:1830px;height:497px;pointer-events:none}
```
